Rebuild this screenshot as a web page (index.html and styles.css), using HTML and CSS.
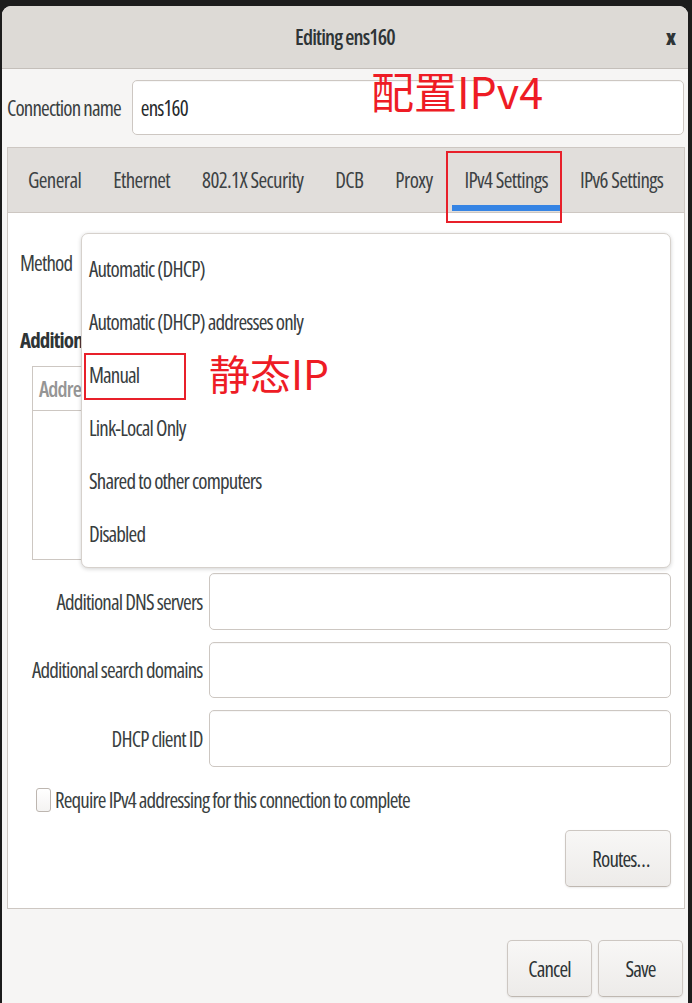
FILE: index.html
```html
<!DOCTYPE html>
<html>
<head>
<meta charset="utf-8">
<title>Editing ens160</title>
<link rel="stylesheet" href="styles.css">
</head>
<body>
<div class="dialog">
  <header class="titlebar">
    <span class="title">Editing ens160</span>
    <span class="close">x</span>
  </header>
  <div class="content">
    <div class="name-row">
      <span class="name-label">Connection name</span>
      <div class="entry name-entry">ens160</div>
    </div>
    <div class="notebook">
      <div class="tabs">
        <div class="tab">General</div>
        <div class="tab">Ethernet</div>
        <div class="tab">802.1X Security</div>
        <div class="tab">DCB</div>
        <div class="tab">Proxy</div>
        <div class="tab active">IPv4 Settings</div>
        <div class="tab">IPv6 Settings</div>
      </div>
      <div class="page">
        <div class="method-row"><span>Method</span></div>
        <div class="section-title">Additional static addresses</div>
        <div class="addr-table">
          <div class="addr-head"><span>Address</span><span>Netmask</span><span>Gateway</span></div>
        </div>
        <div class="form-grid">
          <span class="form-label">Additional DNS servers</span><div class="entry"></div>
          <span class="form-label">Additional search domains</span><div class="entry"></div>
          <span class="form-label">DHCP client ID</span><div class="entry"></div>
        </div>
        <div class="check-row"><span class="checkbox"></span><span>Require IPv4 addressing for this connection to complete</span></div>
        <div class="routes-row"><button class="btn routes">Routes…</button></div>
        <div class="popover">
          <div class="item">Automatic (DHCP)</div>
          <div class="item">Automatic (DHCP) addresses only</div>
          <div class="item">Manual</div>
          <div class="item">Link-Local Only</div>
          <div class="item">Shared to other computers</div>
          <div class="item">Disabled</div>
        </div>
      </div>
    </div>
  </div>
  <div class="actions">
    <button class="btn action">Cancel</button>
    <button class="btn action">Save</button>
  </div>
</div>
<div class="note note-ipv4">配置IPv4</div>
<div class="mark mark-tab"></div>
<div class="mark mark-manual"></div>
<div class="note note-static">静态IP</div>
</body>
</html>
```
FILE: styles.css
```css
html, body {
  margin: 0;
  padding: 0;
}
body {
  background: #1c1c1c;
  width: 692px;
  height: 1003px;
  overflow: hidden;
  position: relative;
  font-family: "Open Sans", "Liberation Sans", sans-serif;
  font-stretch: 75%;
  font-size: 21px;
  letter-spacing: -0.85px;
  color: #3a3f41;
}
.dialog {
  margin: 6px 0 0 2px;
  width: 686px;
  height: 997px;
  background: #f6f5f4;
  border-radius: 9px 9px 0 0;
  display: flex;
  flex-direction: column;
  overflow: hidden;
}
.titlebar {
  height: 62px;
  flex: none;
  background: #dddad6;
  border-bottom: 1px solid #c4bfba;
  display: flex;
  align-items: center;
  justify-content: center;
  position: relative;
}
.title {
  font-weight: 600;
  color: #2e3436;
}
.close {
  position: absolute;
  right: 12px;
  top: 17px;
  font-weight: 800;
  font-size: 21px;
  color: #2e3436;
  letter-spacing: 0;
}
.content {
  padding: 11px 3px 0 5px;
}
.name-row {
  display: flex;
  align-items: center;
  height: 55px;
  gap: 11px;
}
.entry {
  background: #ffffff;
  border: 1px solid #cdc7c2;
  border-radius: 5px;
  box-shadow: inset 0 1px 0 rgba(0,0,0,0.03);
  box-sizing: border-box;
}
.name-entry {
  flex: 1;
  height: 55px;
  margin-right: 1px;
  display: flex;
  align-items: center;
  padding-left: 8px;
  color: #26292b;
}
.notebook {
  margin-top: 12px;
  border: 1px solid #cdc7c2;
}
.tabs {
  height: 64px;
  background: #e1dedb;
  border-bottom: 1px solid #cdc7c2;
  display: flex;
  padding-left: 4px;
}
.tab {
  position: relative;
  padding: 0 12px;
  margin: 0 4px;
  display: flex;
  align-items: center;
  color: #3d4244;
  letter-spacing: -0.6px;
  white-space: nowrap;
}
.tab.active::after {
  content: "";
  position: absolute;
  left: 0;
  right: 0;
  bottom: 1px;
  height: 6px;
  background: #3584e4;
}
.page {
  position: relative;
  background: #ffffff;
  padding: 20px 13px 21px 12px;
}
.method-row {
  height: 60px;
  display: flex;
  align-items: center;
}
.section-title {
  margin-top: 34px;
  line-height: 26px;
  font-weight: 700;
  color: #2e3436;
  white-space: nowrap;
}
.addr-table {
  margin: 13px 0 0 12px;
  height: 194px;
  border: 1px solid #cdc7c2;
  box-sizing: border-box;
}
.addr-head {
  height: 43px;
  border-bottom: 1px solid #cdc7c2;
  display: flex;
  align-items: center;
  gap: 140px;
  padding-left: 6px;
  color: #959595;
  font-weight: 600;
}
.form-grid {
  margin: 13px 0 0 12px;
  display: grid;
  grid-template-columns: auto 1fr;
  grid-template-rows: 57px 56px 57px;
  column-gap: 6px;
  row-gap: 12px;
}
.form-label {
  justify-self: end;
  align-self: center;
  white-space: nowrap;
}
.check-row {
  margin: 19px 0 0 16px;
  height: 28px;
  display: flex;
  align-items: center;
  gap: 4px;
}
.checkbox {
  width: 15px;
  height: 24px;
  box-sizing: border-box;
  border: 1px solid #bdb6b0;
  border-radius: 3px;
  background: linear-gradient(#ffffff, #f4f3f2);
}
.routes-row {
  margin-top: 16px;
  display: flex;
  justify-content: flex-end;
}
.btn {
  font: inherit;
  letter-spacing: inherit;
  color: #2e3436;
  background: linear-gradient(#f8f7f6, #edebe9);
  border: 1px solid #cdc7c2;
  border-bottom-color: #bfb8b1;
  border-radius: 5px;
  box-shadow: 0 1px 2px rgba(0,0,0,0.08);
  height: 57px;
  padding: 0;
}
.routes {
  width: 106px;
  padding-left: 6px;
}
.actions {
  flex: 1;
  display: flex;
  justify-content: flex-end;
  align-items: flex-start;
  gap: 6px;
  padding: 31px 5px 0 0;
}
.action {
  width: 85px;
}
.popover {
  position: absolute;
  left: 73px;
  top: 20px;
  width: 590px;
  height: 335px;
  box-sizing: border-box;
  background: #ffffff;
  border: 1px solid #d6d1cc;
  border-radius: 7px;
  box-shadow: 0 1px 4px rgba(0,0,0,0.18);
  padding: 8px 0;
}
.item {
  height: 53px;
  display: flex;
  align-items: center;
  padding-left: 7px;
  color: #383d3f;
  white-space: nowrap;
}
.note {
  position: absolute;
  color: #ee1c25;
  font-family: "Noto Sans CJK SC", "Noto Sans", sans-serif;
  font-stretch: 100%;
  letter-spacing: 0;
  line-height: 1;
  white-space: nowrap;
}
.note-ipv4 {
  left: 371px;
  top: 69px;
  font-size: 43px;
}
.note-static {
  left: 209px;
  top: 352px;
  font-size: 41px;
}
.mark {
  position: absolute;
  border: 2px solid #e8202a;
  box-sizing: border-box;
}
.mark-tab {
  left: 446px;
  top: 151px;
  width: 116px;
  height: 72px;
}
.mark-manual {
  left: 84px;
  top: 353px;
  width: 102px;
  height: 47px;
}
```
